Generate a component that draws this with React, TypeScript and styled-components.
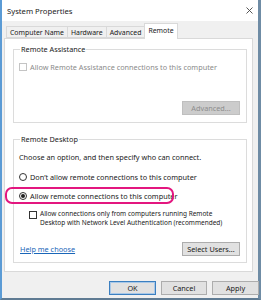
import React from "react";
import styled, { createGlobalStyle } from "styled-components";

const GlobalStyle = createGlobalStyle`
  html, body {
    margin: 0;
    padding: 0;
    background: #ffffff;
  }
  * {
    box-sizing: border-box;
  }
  body {
    font-family: "Noto Sans", "Open Sans", sans-serif;
    color: #1a1a1a;
  }
`;

const FONT = "7.3px";

const Window = styled.div`
  width: 261px;
  height: 300px;
  display: flex;
  flex-direction: column;
  background: #f0f0f0;
  border-left: 2px solid #5b9bd5;
  border-right: 3px solid #6f8ca5;
  border-bottom: 2px solid #5f7b93;
`;

const TitleBar = styled.div`
  height: 21px;
  flex: none;
  display: flex;
  align-items: center;
  justify-content: space-between;
  padding: 0 5px 0 5px;
  background: #ffffff;
`;

const Title = styled.span`
  font-size: 7.7px;
  color: #222;
`;

const CloseIcon = styled.svg`
  width: 7px;
  height: 7px;
  margin-top: -1px;
`;

const Body = styled.div`
  flex: 1;
  display: flex;
  flex-direction: column;
  padding: 2px 0 0 2px;
`;

const TabStrip = styled.div`
  display: flex;
  align-items: flex-end;
  height: 15px;
  padding-left: 3px;
  position: relative;
  z-index: 1;
`;

const Tab = styled.div<{ $active?: boolean }>`
  height: ${({ $active }) => ($active ? "16px" : "12px")};
  margin-bottom: ${({ $active }) => ($active ? "-1px" : "0")};
  padding: 0 3px;
  display: flex;
  align-items: center;
  font-size: 6.9px;
  background: ${({ $active }) => ($active ? "#ffffff" : "#f0f0f0")};
  border: 1px solid #d9d9d9;
  border-bottom: ${({ $active }) => ($active ? "none" : "1px solid #d9d9d9")};
  margin-left: -1px;
  padding-bottom: ${({ $active }) => ($active ? "2px" : "0")};
`;

const Panel = styled.div`
  width: 249px;
  height: 234px;
  background: #ffffff;
  border: 1px solid #d9d9d9;
  padding: 5px 5px 0 8px;
  display: flex;
  flex-direction: column;
  gap: 11px;
`;

const Group = styled.fieldset<{ $height: number }>`
  margin: 0;
  padding: 0 6px 0 5px;
  min-width: 0;
  height: ${({ $height }) => $height}px;
  border: 1px solid #dcdcdc;
  display: flex;
  flex-direction: column;
`;

const Legend = styled.legend`
  font-size: ${FONT};
  line-height: 10px;
  padding: 0 1px;
  margin-left: 1px;
`;

const Row = styled.div<{ $mt: number; $disabled?: boolean }>`
  display: flex;
  align-items: center;
  gap: 3px;
  margin-top: ${({ $mt }) => $mt}px;
  font-size: ${FONT};
  line-height: 10px;
  color: ${({ $disabled }) => ($disabled ? "#8a8a8a" : "#1a1a1a")};
  position: relative;
`;

const Highlight = styled.div`
  position: absolute;
  left: -14px;
  top: -4px;
  width: 169px;
  height: 17px;
  border: 2px solid #e3167f;
  border-radius: 7px;
  pointer-events: none;
`;

const Box = styled.span<{ $disabled?: boolean }>`
  width: 8px;
  height: 8px;
  flex: none;
  border: 1px solid ${({ $disabled }) => ($disabled ? "#c4c4c4" : "#333")};
  background: #fff;
`;

const Radio = styled.span<{ $checked?: boolean }>`
  width: 8px;
  height: 8px;
  flex: none;
  border-radius: 50%;
  border: 1px solid #333;
  background: #fff;
  display: flex;
  align-items: center;
  justify-content: center;
  &::after {
    content: "";
    width: 4px;
    height: 4px;
    border-radius: 50%;
    background: ${({ $checked }) => ($checked ? "#222" : "transparent")};
  }
`;

const CheckBlock = styled.div`
  display: flex;
  align-items: flex-start;
  gap: 3px;
  margin-top: 9px;
  padding-left: 10px;
  font-size: 6.5px;
  line-height: 8.6px;
`;

const CheckBlockBox = styled(Box)`
  margin-top: 0.5px;
`;

const Text = styled.span`
  white-space: nowrap;
`;

const ActionRow = styled.div<{ $mt: number }>`
  display: flex;
  align-items: center;
  justify-content: space-between;
  margin-top: ${({ $mt }) => $mt}px;
`;

const Link = styled.a`
  font-size: ${FONT};
  color: #1a66b8;
  text-decoration: underline;
  padding-left: 1px;
`;

const Button = styled.button<{ $disabled?: boolean; $default?: boolean; $w: number }>`
  width: ${({ $w }) => $w}px;
  height: 14px;
  padding: 0;
  font-family: "Noto Sans", "Open Sans", sans-serif;
  font-size: ${FONT};
  color: ${({ $disabled }) => ($disabled ? "#8d8d8d" : "#1a1a1a")};
  background: ${({ $disabled }) => ($disabled ? "#cccccc" : "#e1e1e1")};
  border: 1px solid
    ${({ $disabled, $default }) => ($disabled ? "#bfbfbf" : $default ? "#3b7fc0" : "#adadad")};
  box-shadow: ${({ $default }) => ($default ? "inset 0 0 0 1px #a8c8e8" : "none")};
`;

const Spacer = styled.div`
  flex: 1;
`;

const Footer = styled.div`
  display: flex;
  justify-content: flex-end;
  gap: 5px;
  padding: 0 0 6px 0;
  margin-top: 9px;
  margin-right: -1px;
`;

export default function App() {
  return (
    <>
      <GlobalStyle />
      <Window>
        <TitleBar>
          <Title>System Properties</Title>
          <CloseIcon viewBox="0 0 7 7">
            <path d="M0.5 0.5 L6.5 6.5 M6.5 0.5 L0.5 6.5" stroke="#444" strokeWidth="0.9" />
          </CloseIcon>
        </TitleBar>
        <Body>
          <TabStrip>
            <Tab>Computer Name</Tab>
            <Tab>Hardware</Tab>
            <Tab>Advanced</Tab>
            <Tab $active>Remote</Tab>
          </TabStrip>
          <Panel>
            <Group $height={79}>
              <Legend>Remote Assistance</Legend>
              <Row $mt={8} $disabled>
                <Box $disabled />
                <Text>Allow Remote Assistance connections to this computer</Text>
              </Row>
              <ActionRow $mt={29}>
                <span />
                <Button $disabled $w={58}>Advanced...</Button>
              </ActionRow>
            </Group>
            <Group $height={129}>
              <Legend>Remote Desktop</Legend>
              <Row $mt={8}>
                <Text>Choose an option, and then specify who can connect.</Text>
              </Row>
              <Row $mt={10}>
                <Radio />
                <Text>Don’t allow remote connections to this computer</Text>
              </Row>
              <Row $mt={9}>
                <Highlight />
                <Radio $checked />
                <Text>Allow remote connections to this computer</Text>
              </Row>
              <CheckBlock>
                <CheckBlockBox />
                <Text>
                  Allow connections only from computers running Remote
                  <br />
                  Desktop with Network Level Authentication (recommended)
                </Text>
              </CheckBlock>
              <ActionRow $mt={15}>
                <Link>Help me choose</Link>
                <Button $w={58}>Select Users...</Button>
              </ActionRow>
            </Group>
          </Panel>
          <Spacer />
          <Footer>
            <Button $default $w={47}>OK</Button>
            <Button $w={46}>Cancel</Button>
            <Button $w={47}>Apply</Button>
          </Footer>
        </Body>
      </Window>
    </>
  );
}
